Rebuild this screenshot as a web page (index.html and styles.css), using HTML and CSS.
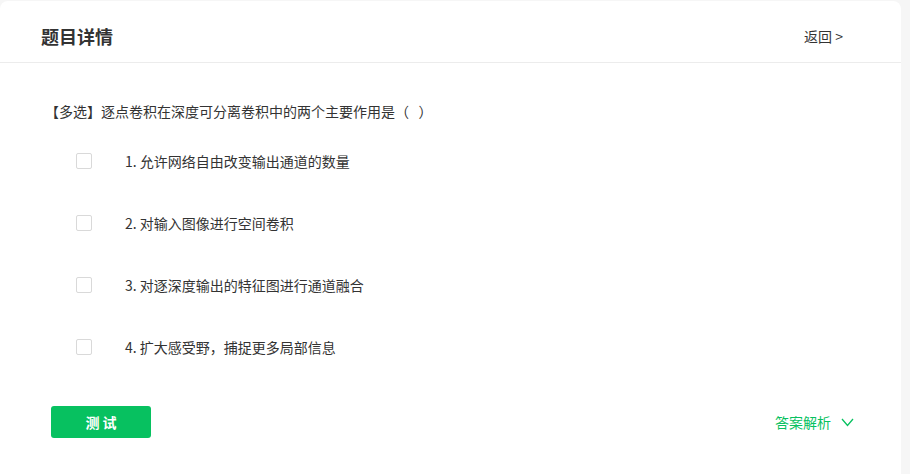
FILE: index.html
```html
<!DOCTYPE html>
<html lang="zh-CN">
<head>
<meta charset="utf-8">
<title>题目详情</title>
<link rel="stylesheet" href="styles.css">
</head>
<body>
<div class="card">
  <div class="header">
    <div class="title">题目详情</div>
    <a class="back">返回 &gt;</a>
  </div>
  <div class="body">
    <div class="question">【多选】逐点卷积在深度可分离卷积中的两个主要作用是（&nbsp;&nbsp;&nbsp;）</div>
    <ul class="options">
      <li class="option"><span class="box"></span><span class="label">1. 允许网络自由改变输出通道的数量</span></li>
      <li class="option"><span class="box"></span><span class="label">2. 对输入图像进行空间卷积</span></li>
      <li class="option"><span class="box"></span><span class="label">3. 对逐深度输出的特征图进行通道融合</span></li>
      <li class="option"><span class="box"></span><span class="label">4. 扩大感受野，捕捉更多局部信息</span></li>
    </ul>
    <div class="footer">
      <button class="test-btn">测 试</button>
      <a class="analysis">答案解析
        <svg class="chev" width="13" height="9" viewBox="0 0 13 9"><polyline points="1,1 6.5,7.5 12,1" fill="none" stroke="#07c160" stroke-width="1.3"/></svg>
      </a>
    </div>
  </div>
</div>
</body>
</html>
```
FILE: styles.css
```css
html, body {
  margin: 0;
  padding: 0;
  background: #f6f6f6;
  font-family: "Noto Sans CJK SC", "Microsoft YaHei", sans-serif;
  color: #333;
}
.card {
  margin-top: 1px;
  width: 901px;
  height: 473px;
  background: #fff;
  border-radius: 8px 8px 0 0;
  box-sizing: border-box;
}
.header {
  display: flex;
  justify-content: space-between;
  align-items: center;
  height: 62px;
  padding: 8px 58px 0 41px;
  box-sizing: border-box;
  border-bottom: 1px solid #ececec;
}
.title {
  font-size: 18px;
  font-weight: bold;
  line-height: 26px;
  color: #333;
}
.back {
  font-size: 14px;
  line-height: 20px;
  color: #333;
  cursor: pointer;
}
.body {
  padding: 38px 47px 0 45px;
}
.question {
  font-size: 14px;
  line-height: 20px;
}
.options {
  list-style: none;
  margin: 30px 0 0;
  padding: 0 0 0 31px;
  display: flex;
  flex-direction: column;
  gap: 42px;
}
.option {
  display: flex;
  align-items: center;
  height: 20px;
  font-size: 14px;
  line-height: 20px;
}
.box {
  width: 14px;
  height: 14px;
  border: 1px solid #d9d9d9;
  border-radius: 2px;
  margin-right: 33px;
  flex: none;
}
.footer {
  display: flex;
  justify-content: space-between;
  align-items: center;
  margin-top: 49px;
  padding-left: 6px;
}
.test-btn {
  width: 100px;
  height: 32px;
  border: none;
  border-radius: 3px;
  background: #07c160;
  color: #fff;
  font-family: inherit;
  font-size: 14px;
  font-weight: bold;
  padding: 0;
}
.analysis {
  display: flex;
  align-items: center;
  gap: 10px;
  font-size: 14px;
  color: #07c160;
  cursor: pointer;
}
.chev {
  display: block;
}
```
